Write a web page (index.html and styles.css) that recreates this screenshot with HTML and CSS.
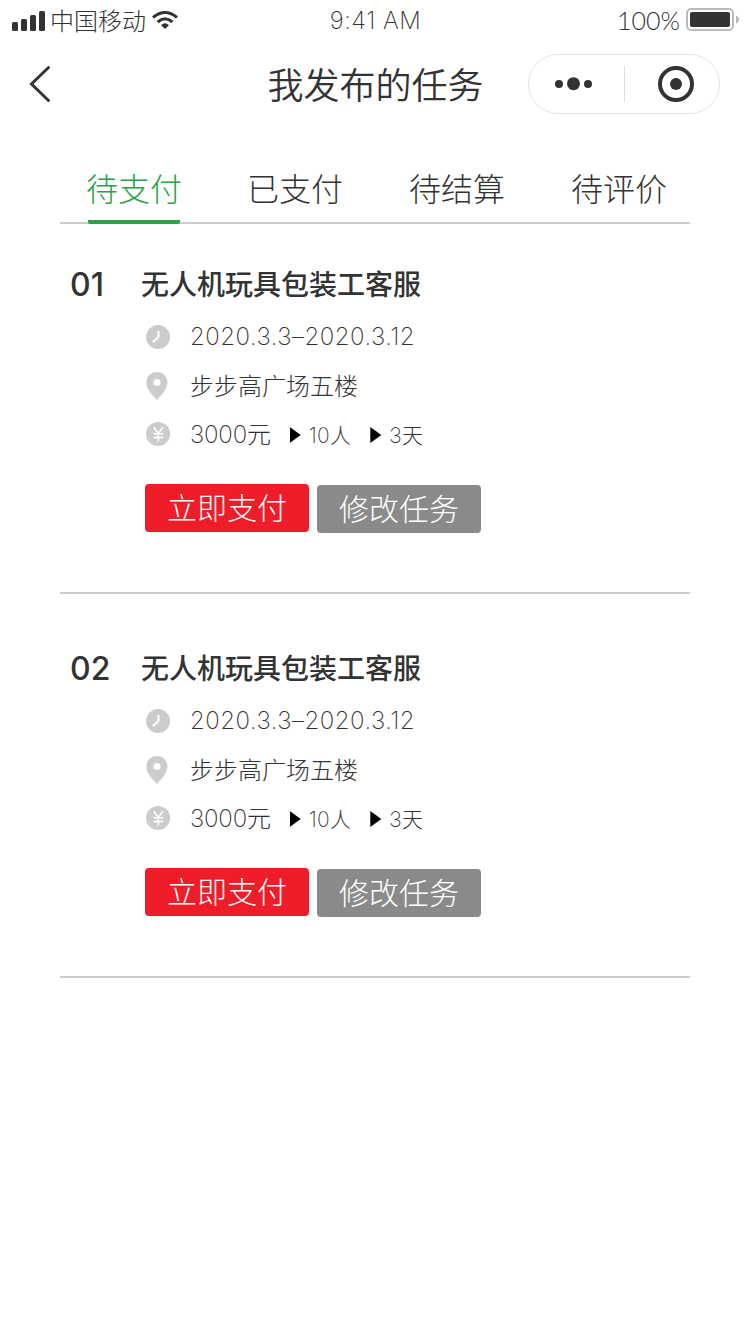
FILE: index.html
```html
<!DOCTYPE html>
<html lang="zh-CN">
<head>
    <meta charset="UTF-8">
    <meta name="viewport" content="width=device-width, initial-scale=1.0">
    <title>我发布的任务</title>
    <link rel="stylesheet" href="styles.css">
</head>
<body>
    <!-- icons shared by the task rows -->
    <svg class="sprite" width="0" height="0">
        <symbol id="icon-time" viewBox="0 0 24 24">
            <circle cx="12" cy="12" r="12" fill="#ccc"/>
            <path d="M12.5 6v5q0 1.200-.9 2L7 17" fill="none" stroke="#fff" stroke-width="2"/>
        </symbol>
        <symbol id="icon-place" viewBox="0 0 22 28">
            <path d="M11 0C4.700 0 .3 4.700.3 10.600.3 17 6 22.500 11 28c5-5.500 10.500-11 10.500-17.400C21.500 4.700 17.200 0 11 0z" fill="#ccc"/>
            <circle cx="11" cy="10.500" r="3.600" fill="#fff"/>
        </symbol>
        <symbol id="icon-money" viewBox="0 0 24 24">
            <circle cx="12" cy="12" r="12" fill="#ccc"/>
            <path d="M7.600 5l4.700 6.500L17 5M12.300 11.500v8M7.300 11.800h10M7.300 15.500h10" fill="none" stroke="#fff" stroke-width="1.500"/>
        </symbol>
    </svg>

    <div class="status-bar">
        <div class="status-left">
            <svg class="signal" width="33" height="20" viewBox="0 0 33 20" fill="#333">
                <rect x="0" y="11" width="6" height="9" rx="1.500"/>
                <rect x="9" y="8" width="6" height="12" rx="1.500"/>
                <rect x="18" y="4" width="6" height="16" rx="1.500"/>
                <rect x="27" y="0" width="6" height="20" rx="1.500"/>
            </svg>
            <span class="carrier">中国移动</span>
            <svg class="wifi" width="26" height="18" viewBox="0 0 26 18" fill="none" stroke="#333" stroke-width="3">
                <path d="M1 6.500Q13-3.500 25 6.500"/>
                <path d="M5.600 11Q13 4.500 20.400 11"/>
                <path d="M9 14.300Q13 10 17 14.300L13 18z" fill="#333" stroke="none"/>
            </svg>
        </div>
        <div class="status-time">9:41 AM</div>
        <div class="status-right">
            <span class="percent">100%</span>
            <svg class="battery" width="53" height="24" viewBox="0 0 53 24">
                <rect x="1" y="1" width="46" height="21" rx="4" fill="none" stroke="#bbb" stroke-width="2"/>
                <rect x="4" y="4" width="40" height="15" rx="2" fill="#333"/>
                <path d="M50 7.500q3 1 3 4t-3 4z" fill="#bbb"/>
            </svg>
        </div>
    </div>

    <div class="nav-bar">
        <svg class="back" width="22" height="38" viewBox="0 0 22 38" fill="none" stroke="#333" stroke-width="3" stroke-linecap="round">
            <path d="M19.500 2.500L2.500 19l17 16.500"/>
        </svg>
        <h1>我发布的任务</h1>
        <div class="capsule">
            <svg class="more" width="38" height="14" viewBox="0 0 38 14" fill="#333">
                <circle cx="4" cy="7" r="4"/>
                <circle cx="18.500" cy="6.700" r="6.500"/>
                <circle cx="33" cy="7" r="4"/>
            </svg>
            <span class="divider"></span>
            <svg class="close" width="36" height="36" viewBox="0 0 36 36">
                <circle cx="18" cy="18" r="16" fill="none" stroke="#333" stroke-width="4"/>
                <circle cx="18" cy="18" r="6" fill="#333"/>
            </svg>
        </div>
    </div>

    <div class="tabs">
        <div class="tab active">待支付</div>
        <div class="tab">已支付</div>
        <div class="tab">待结算</div>
        <div class="tab">待评价</div>
    </div>

    <div class="task-list">
        <div class="task">
            <div class="task-number">01</div>
            <div class="task-body">
                <h2>无人机玩具包装工客服</h2>
                <div class="row date">
                    <svg width="24" height="24"><use href="#icon-time"/></svg>
                    <span>2020.3.3–2020.3.12</span>
                </div>
                <div class="row place">
                    <svg width="22" height="28"><use href="#icon-place"/></svg>
                    <span>步步高广场五楼</span>
                </div>
                <div class="row price">
                    <svg width="24" height="24"><use href="#icon-money"/></svg>
                    <span class="amount">3000元</span>
                    <i class="arrow"></i>
                    <span class="small">10人</span>
                    <i class="arrow"></i>
                    <span class="small">3天</span>
                </div>
                <div class="buttons">
                    <button class="pay">立即支付</button>
                    <button class="edit">修改任务</button>
                </div>
            </div>
        </div>

        <div class="task">
            <div class="task-number">02</div>
            <div class="task-body">
                <h2>无人机玩具包装工客服</h2>
                <div class="row date">
                    <svg width="24" height="24"><use href="#icon-time"/></svg>
                    <span>2020.3.3–2020.3.12</span>
                </div>
                <div class="row place">
                    <svg width="22" height="28"><use href="#icon-place"/></svg>
                    <span>步步高广场五楼</span>
                </div>
                <div class="row price">
                    <svg width="24" height="24"><use href="#icon-money"/></svg>
                    <span class="amount">3000元</span>
                    <i class="arrow"></i>
                    <span class="small">10人</span>
                    <i class="arrow"></i>
                    <span class="small">3天</span>
                </div>
                <div class="buttons">
                    <button class="pay">立即支付</button>
                    <button class="edit">修改任务</button>
                </div>
            </div>
        </div>
    </div>
</body>
</html>
```
FILE: styles.css
```css
* {
    box-sizing: border-box;
}
body {
    margin: 0;
    min-height: 100vh;
    background-color: #fff;
    color: #333;
    font-family: Inter, "Noto Sans CJK SC", sans-serif;
    font-weight: 300;
}
svg {
    display: block;
    flex: none;
}
.sprite {
    position: absolute;
}
.status-bar {
    display: grid;
    grid-template-columns: 1fr auto 1fr;
    align-items: center;
    height: 40px;
    padding: 0 11px 0 12px;
    font-size: 24px;
    line-height: 36px;
}
.status-left,
.status-right {
    display: flex;
    align-items: center;
}
.status-right {
    justify-content: flex-end;
}
.signal {
    margin-top: 2px;
}
.carrier {
    margin: 0 6px 0 5px;
    padding-top: 3px;
}
.status-time {
    padding-top: 2px;
    font-weight: 250;
    letter-spacing: 0.5px;
}
.percent {
    font-family: Lato, sans-serif;
    font-size: 25px;
    margin-right: 6px;
    padding-bottom: 1px;
}
.nav-bar {
    display: grid;
    grid-template-columns: 1fr auto 1fr;
    align-items: center;
    height: 88px;
    padding: 0 29px 0 29px;
}
h1 {
    margin: 0;
    padding: 4px 0 0 1px;
    font-size: 36px;
    font-weight: 350;
    line-height: 60px;
}
.capsule {
    justify-self: end;
    display: flex;
    align-items: center;
    width: 192px;
    height: 60px;
    margin-right: 1px;
    padding: 0 25px 0 26px;
    border: 1px solid #e2e2e2;
    border-radius: 30px;
}
.divider {
    width: 1px;
    height: 36px;
    margin: 0 33px 0 31px;
    background-color: #ddd;
}
.tabs {
    display: flex;
    justify-content: space-between;
    height: 64px;
    margin: 32px 60px 0;
    padding: 0 24px 0 28px;
    border-bottom: 2px solid #ccc;
}
.tab {
    width: 94px;
    height: 64px;
    display: flex;
    justify-content: center;
    font-size: 32px;
    line-height: 60px;
    white-space: nowrap;
}
.tab.active {
    width: 92px;
    border-bottom: 4px solid #2ba245;
    border-radius: 2px;
    color: #2ba245;
}
.task-list {
    margin: 0 60px;
}
.task {
    display: flex;
    height: 384px;
    padding: 53px 0 0 10px;
    border-bottom: 2px solid #ccc;
}
.task:first-child {
    height: 370px;
    padding-top: 39px;
}
.task-number {
    width: 71px;
    font-size: 32px;
    font-weight: 500;
    line-height: 43px;
}
h2 {
    margin: 0 0 6px;
    padding-top: 1px;
    font-size: 28px;
    font-weight: 500;
    line-height: 42px;
}
.row {
    display: flex;
    align-items: center;
    height: 48px;
    padding-left: 5px;
    font-size: 24px;
    line-height: 44px;
}
.row svg {
    width: 24px;
    margin-right: 20px;
}
.date {
    height: 50px;
    font-weight: 250;
    letter-spacing: 0.5px;
}
.row.place svg {
    width: 22px;
    margin-right: 22px;
}
.place span,
.price span {
    padding-top: 2px;
}
.price {
    font-weight: 250;
}
.amount {
    letter-spacing: -0.2px;
}
.arrow {
    width: 11px;
    height: 16px;
    margin: 2px 8px 0 19px;
    background-color: #000;
    clip-path: polygon(0 0, 100% 50%, 0 100%);
}
.price .small {
    padding-top: 3px;
    font-size: 21px;
    letter-spacing: 0.3px;
}
.buttons {
    display: flex;
    gap: 8px;
    padding: 26px 0 0 4px;
}
button {
    width: 164px;
    height: 48px;
    padding: 0;
    border: none;
    border-radius: 4px;
    color: #fff;
    font-family: inherit;
    font-size: 30px;
    font-weight: 300;
    line-height: 48px;
}
.pay {
    background-color: #ef1c29;
}
.edit {
    margin-top: 1px;
    background-color: #8a8a8a;
}
```
